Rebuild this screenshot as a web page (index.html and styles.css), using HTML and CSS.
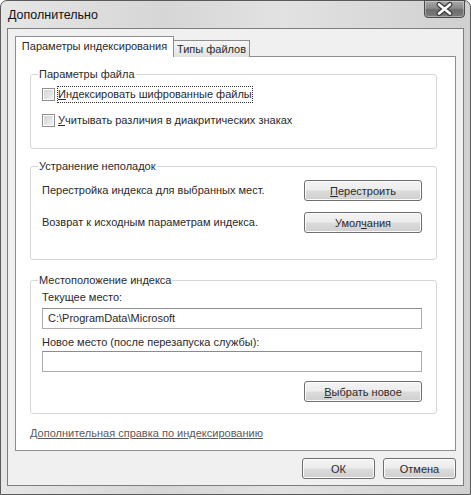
FILE: index.html
```html
<!DOCTYPE html>
<html lang="ru">
<head>
    <meta charset="UTF-8">
    <meta name="viewport" content="width=device-width, initial-scale=1.0">
    <title>Дополнительно</title>
    <link rel="stylesheet" href="styles.css">
</head>
<body>
    <div class="window">
        <div class="titlebar">
            <span class="title">Дополнительно</span>
            <button class="close" type="button" aria-label="Закрыть">
                <svg width="41" height="18" viewBox="0 0 41 18">
                    <path d="M15 4.5 L26 13.5 M26 4.5 L15 13.5" stroke="#3c3c3c" stroke-width="5" stroke-linecap="round"/>
                    <path d="M15 4.5 L26 13.5 M26 4.5 L15 13.5" stroke="#ffffff" stroke-width="2.6" stroke-linecap="round"/>
                </svg>
            </button>
        </div>

        <div class="client">
            <div class="tabs">
                <div class="tab active">Параметры индексирования</div>
                <div class="tab">Типы файлов</div>
            </div>

            <div class="panel">
                <fieldset class="group group-file">
                    <legend>Параметры файла</legend>
                    <label class="check">
                        <span class="box"></span>
                        <span class="focus"><u>И</u>ндексировать шифрованные файлы</span>
                    </label>
                    <label class="check">
                        <span class="box"></span>
                        <span><u>У</u>читывать различия в диакритических знаках</span>
                    </label>
                </fieldset>

                <fieldset class="group group-trouble">
                    <legend>Устранение неполадок</legend>
                    <div class="row">
                        <span>Перестройка индекса для выбранных мест.</span>
                        <button class="btn wide" type="button"><u>П</u>ерестроить</button>
                    </div>
                    <div class="row">
                        <span>Возврат к исходным параметрам индекса.</span>
                        <button class="btn wide" type="button">Умол<u>ч</u>ания</button>
                    </div>
                </fieldset>

                <fieldset class="group group-location">
                    <legend>Местоположение индекса</legend>
                    <div class="label">Текущее место:</div>
                    <div class="field">C:\ProgramData\Microsoft</div>
                    <div class="label label-new">Новое место (после перезапуска службы):</div>
                    <div class="field field-new"></div>
                    <div class="actions">
                        <button class="btn wide" type="button"><u>В</u>ыбрать новое</button>
                    </div>
                </fieldset>

                <a class="help" href="#">Дополнительная справка по индексированию</a>
            </div>

            <div class="footer">
                <button class="btn" type="button">ОК</button>
                <button class="btn" type="button">Отмена</button>
            </div>
        </div>
    </div>
</body>
</html>
```

FILE: styles.css
```css
body {
    margin: 0;
    font-family: "Liberation Sans", Arial, sans-serif;
    font-size: 11px;
    line-height: 15px;
    color: #2a2a2a;
    background-color: #ffffff;
}
.window {
    width: 471px;
    height: 495px;
    box-sizing: border-box;
    border: 1px solid #5a5a5a;
    border-radius: 7px 7px 0 0;
    background: linear-gradient(to right, #e6e6e6 0%, #d6d6d6 35%, #e2e2e2 60%, #d0d0d0 100%);
    display: flex;
    flex-direction: column;
}
.titlebar {
    height: 27px;
    display: flex;
    justify-content: space-between;
    align-items: flex-start;
    flex-shrink: 0;
}
.title {
    margin: 7px 0 0 7px;
    font-size: 12.5px;
    color: #111;
}
.close {
    width: 41px;
    height: 18px;
    margin: -1px 5px 0 0;
    padding: 0;
    border: 1px solid #4a4a4a;
    border-radius: 0 0 4px 4px;
    background: linear-gradient(#a8a8a8 0%, #8a8a8a 45%, #6c6c6c 55%, #7c7c7c 100%);
    box-shadow: inset 0 0 0 1px rgba(255, 255, 255, 0.35);
}
.close svg {
    display: block;
    margin: -1px;
}
.client {
    width: 457px;
    box-sizing: border-box;
    margin-left: 6px;
    border: 1px solid #7e7e7e;
    background-color: #f0f0f0;
    padding: 7px 7px 6px 7px;
}
.tabs {
    display: flex;
    align-items: flex-end;
    height: 21px;
    margin-bottom: -1px;
    white-space: nowrap;
}
.tab {
    box-sizing: border-box;
    height: 17px;
    width: 77px;
    margin-left: -1px;
    border: 1px solid #8e8e8e;
    border-bottom: none;
    background: linear-gradient(#f6f6f6, #e2e2e2);
    text-align: center;
    line-height: 16px;
}
.tab.active {
    position: relative;
    z-index: 1;
    height: 21px;
    width: 159px;
    margin-left: 0;
    background: #ffffff;
    line-height: 19px;
}
.panel {
    box-sizing: border-box;
    height: 395px;
    border: 1px solid #8e8e8e;
    background-color: #ffffff;
    padding: 10px 18px 0 14px;
}
.group {
    margin: 0;
    padding: 0 14px 0 11px;
    border: 1px solid #d6d6d6;
    border-radius: 3px;
}
.group legend {
    margin-left: -4px;
    padding: 0 1px;
}
.group-file {
    padding-bottom: 18px;
}
.check {
    display: flex;
    align-items: center;
    height: 20px;
    margin-top: 2px;
}
.check + .check {
    margin-top: 6px;
}
.box {
    width: 13px;
    height: 13px;
    box-sizing: border-box;
    margin-right: 3px;
    border: 1px solid #8f8f8f;
    background: linear-gradient(135deg, #cfcfcf, #f4f4f4);
    box-shadow: inset 0 0 0 1px #ffffff;
}
.focus {
    outline: 1px dotted #333;
    outline-offset: 0;
}
.group-trouble {
    margin-top: 10px;
    padding-bottom: 26px;
}
.row {
    display: flex;
    justify-content: space-between;
    align-items: center;
    margin-top: 6px;
}
.row + .row {
    margin-top: 11px;
}
.btn {
    box-sizing: border-box;
    width: 73px;
    height: 21px;
    padding: 0;
    border: 1px solid #6f6f6f;
    border-radius: 3px;
    background: linear-gradient(#f4f4f4 0%, #ececec 48%, #dcdcdc 52%, #cfcfcf 100%);
    box-shadow: inset 0 0 0 1px #fbfbfb;
    font-family: inherit;
    font-size: 11px;
    color: #2a2a2a;
}
.btn.wide {
    width: 118px;
}
.group-location {
    margin-top: 13px;
    padding-bottom: 11px;
}
.label {
    margin-top: 2px;
}
.label-new {
    margin-top: 6px;
}
.field {
    box-sizing: border-box;
    height: 21px;
    margin-top: 3px;
    padding: 2px 5px;
    border: 1px solid #ababab;
    border-top-color: #8c8c8c;
    background-color: #ffffff;
}
.field-new {
    margin-top: 1px;
}
.actions {
    display: flex;
    justify-content: flex-end;
    margin-top: 9px;
}
.help {
    display: inline-block;
    margin-top: 12px;
    color: #5a5a5a;
    text-decoration: underline;
}
.footer {
    display: flex;
    justify-content: flex-end;
    gap: 8px;
    margin-top: 7px;
}
```
